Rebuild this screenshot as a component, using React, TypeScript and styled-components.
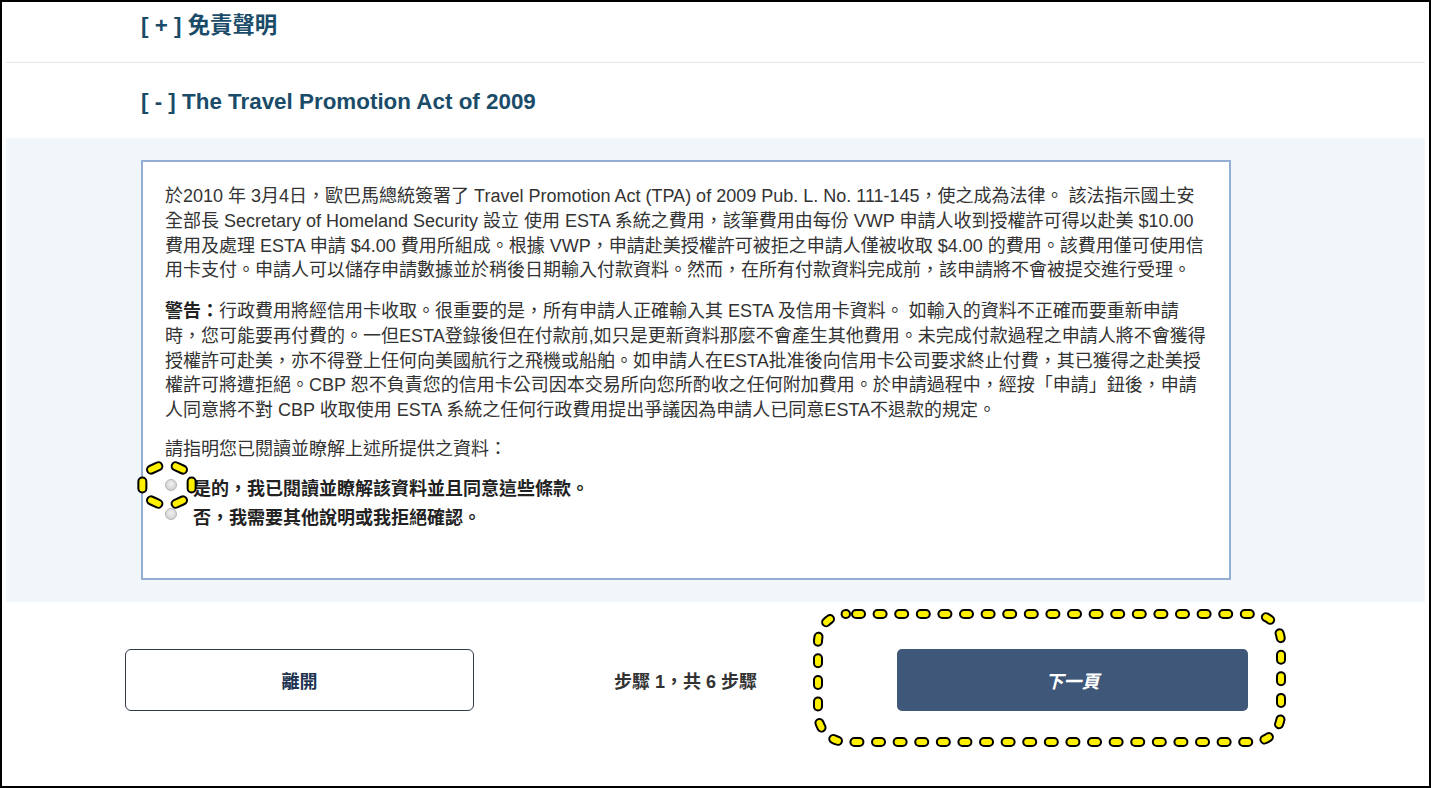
import React from "react";
import styled, { createGlobalStyle } from "styled-components";

const Global = createGlobalStyle`
  html, body { margin: 0; padding: 0; background: #fff; overflow: hidden; }
  * { box-sizing: border-box; }
  body { font-family: "Liberation Sans", "Noto Sans CJK TC", Arial, sans-serif; }
`;

const Frame = styled.div`
  position: relative;
  width: 1431px;
  height: 788px;
  border: 2px solid #000;
  padding: 0 4px;
  background: #fff;
  overflow: hidden;
`;

const SectionHeader = styled.div<{ $top: number; $bottom: number; $divider?: boolean }>`
  padding: ${(p) => p.$top}px 0 ${(p) => p.$bottom}px 135px;
  border-bottom: ${(p) => (p.$divider ? "1px solid #e6e6e6" : "none")};
`;

const HeaderTitle = styled.h2`
  margin: 0;
  font-size: 22.4px;
  line-height: 30px;
  font-weight: bold;
  color: #1a4c69;
  font-family: "Liberation Sans", "Noto Sans CJK TC", Arial, sans-serif;
`;

const Band = styled.div`
  background: #f1f6fa;
  padding: 22px 0 22px 135px;
`;

const TextBox = styled.div`
  width: 1090px;
  min-height: 420px;
  background: #fff;
  border: 2px solid #93aed2;
  padding: 22px 24px 22px 22px;
  color: #333;
  font-size: 18px;
  line-height: 24.75px;
`;

const Para = styled.p<{ $gap: number }>`
  margin: 0 0 ${(p) => p.$gap}px 0;
  white-space: nowrap;
`;

const Strong = styled.b`
  font-weight: bold;
  color: #222;
`;

const RadioList = styled.div`
  display: flex;
  flex-direction: column;
`;

const RadioRow = styled.label`
  display: flex;
  align-items: flex-start;
  line-height: 29px;
  font-weight: bold;
  color: #222;
  cursor: pointer;
`;

const Radio = styled.input.attrs({ type: "radio" })`
  appearance: none;
  -webkit-appearance: none;
  width: 12px;
  height: 12px;
  margin: 4px 16px 0 0;
  flex: none;
  border-radius: 50%;
  border: 1px solid #b4b4b4;
  background: radial-gradient(circle at 50% 40%, #f2f2f2 0%, #d4d4d4 70%, #c4c4c4 100%);
`;

const Footer = styled.div`
  display: grid;
  grid-template-columns: 349px 423px 351px;
  align-items: center;
  padding: 47px 0 0 119px;
`;

const LeaveButton = styled.button`
  height: 62px;
  background: #fff;
  border: 1.5px solid #323c49;
  border-radius: 6px;
  color: #1f3453;
  font-size: 18px;
  font-weight: bold;
  font-family: "Liberation Sans", "Noto Sans CJK TC", Arial, sans-serif;
`;

const StepText = styled.div`
  justify-self: center;
  font-size: 18px;
  font-weight: bold;
  color: #333;
`;

const NextButton = styled.button`
  height: 62px;
  background: #3f5779;
  border: none;
  border-radius: 5px;
  color: #fff;
  font-size: 18px;
  font-weight: bold;
  font-style: italic;
  font-family: "Liberation Sans", "Noto Sans CJK TC", Arial, sans-serif;
`;

const Overlay = styled.svg`
  position: absolute;
  left: -2px;
  top: -2px;
  width: 1431px;
  height: 788px;
  pointer-events: none;
`;

const ringDashes = () => {
  const cx = 167;
  const cy = 485;
  const rx = 25;
  const ry = 20;
  const out: React.ReactNode[] = [];
  const d = 0.17;
  [0, 60, 120, 180, 240, 300].forEach((deg) => {
    const t = (deg * Math.PI) / 180;
    const x1 = cx + rx * Math.cos(t - d);
    const y1 = cy - ry * Math.sin(t - d);
    const x2 = cx + rx * Math.cos(t + d);
    const y2 = cy - ry * Math.sin(t + d);
    out.push(
      <line key={`b${deg}`} x1={x1} y1={y1} x2={x2} y2={y2} stroke="#000" strokeWidth={10} strokeLinecap="round" />
    );
    out.push(
      <line key={`y${deg}`} x1={x1} y1={y1} x2={x2} y2={y2} stroke="#fff000" strokeWidth={6} strokeLinecap="round" />
    );
  });
  return out;
};

export default function App() {
  return (
    <>
      <Global />
      <Frame>
        <SectionHeader $top={9} $bottom={21} $divider>
          <HeaderTitle>[ + ] 免責聲明</HeaderTitle>
        </SectionHeader>
        <SectionHeader $top={24} $bottom={21}>
          <HeaderTitle>[ - ] The Travel Promotion Act of 2009</HeaderTitle>
        </SectionHeader>
        <Band>
          <TextBox>
            <Para $gap={16}>
              於2010 年 3月4日，歐巴馬總統簽署了 Travel Promotion Act (TPA) of 2009 Pub. L. No. 111-145，使之成為法律。 該法指示國土安
              <br />
              全部長 Secretary of Homeland Security 設立 使用 ESTA 系統之費用，該筆費用由每份 VWP 申請人收到授權許可得以赴美 $10.00
              <br />
              費用及處理 ESTA 申請 $4.00 費用所組成。根據 VWP，申請赴美授權許可被拒之申請人僅被收取 $4.00 的費用。該費用僅可使用信
              <br />
              用卡支付。申請人可以儲存申請數據並於稍後日期輸入付款資料。然而，在所有付款資料完成前，該申請將不會被提交進行受理。
            </Para>
            <Para $gap={14}>
              <Strong>警告：</Strong>行政費用將經信用卡收取。很重要的是，所有申請人正確輸入其 ESTA 及信用卡資料。 如輸入的資料不正確而要重新申請
              <br />
              時，您可能要再付費的。一但ESTA登錄後但在付款前,如只是更新資料那麼不會產生其他費用。未完成付款過程之申請人將不會獲得
              <br />
              授權許可赴美，亦不得登上任何向美國航行之飛機或船舶。如申請人在ESTA批准後向信用卡公司要求終止付費，其已獲得之赴美授
              <br />
              權許可將遭拒絕。CBP 恕不負責您的信用卡公司因本交易所向您所酌收之任何附加費用。於申請過程中，經按「申請」鈕後，申請
              <br />
              人同意將不對 CBP 收取使用 ESTA 系統之任何行政費用提出爭議因為申請人已同意ESTA不退款的規定。
            </Para>
            <Para $gap={13}>請指明您已閱讀並瞭解上述所提供之資料：</Para>
            <RadioList>
              <RadioRow>
                <Radio name="agree" />
                是的，我已閱讀並瞭解該資料並且同意這些條款。
              </RadioRow>
              <RadioRow>
                <Radio name="agree" />
                否，我需要其他說明或我拒絕確認。
              </RadioRow>
            </RadioList>
          </TextBox>
        </Band>
        <Footer>
          <LeaveButton>離開</LeaveButton>
          <StepText>步驟 1，共 6 步驟</StepText>
          <NextButton>下一頁</NextButton>
        </Footer>
        <Overlay viewBox="0 0 1431 788">
          <rect x={818} y={614} width={463} height={128} rx={28} fill="none" stroke="#000" strokeWidth={10} strokeLinecap="round" strokeDasharray="5 16.6" strokeDashoffset={-10} />
          <rect x={818} y={614} width={463} height={128} rx={28} fill="none" stroke="#fff000" strokeWidth={6} strokeLinecap="round" strokeDasharray="5 16.6" strokeDashoffset={-10} />
          {ringDashes()}
        </Overlay>
      </Frame>
    </>
  );
}
